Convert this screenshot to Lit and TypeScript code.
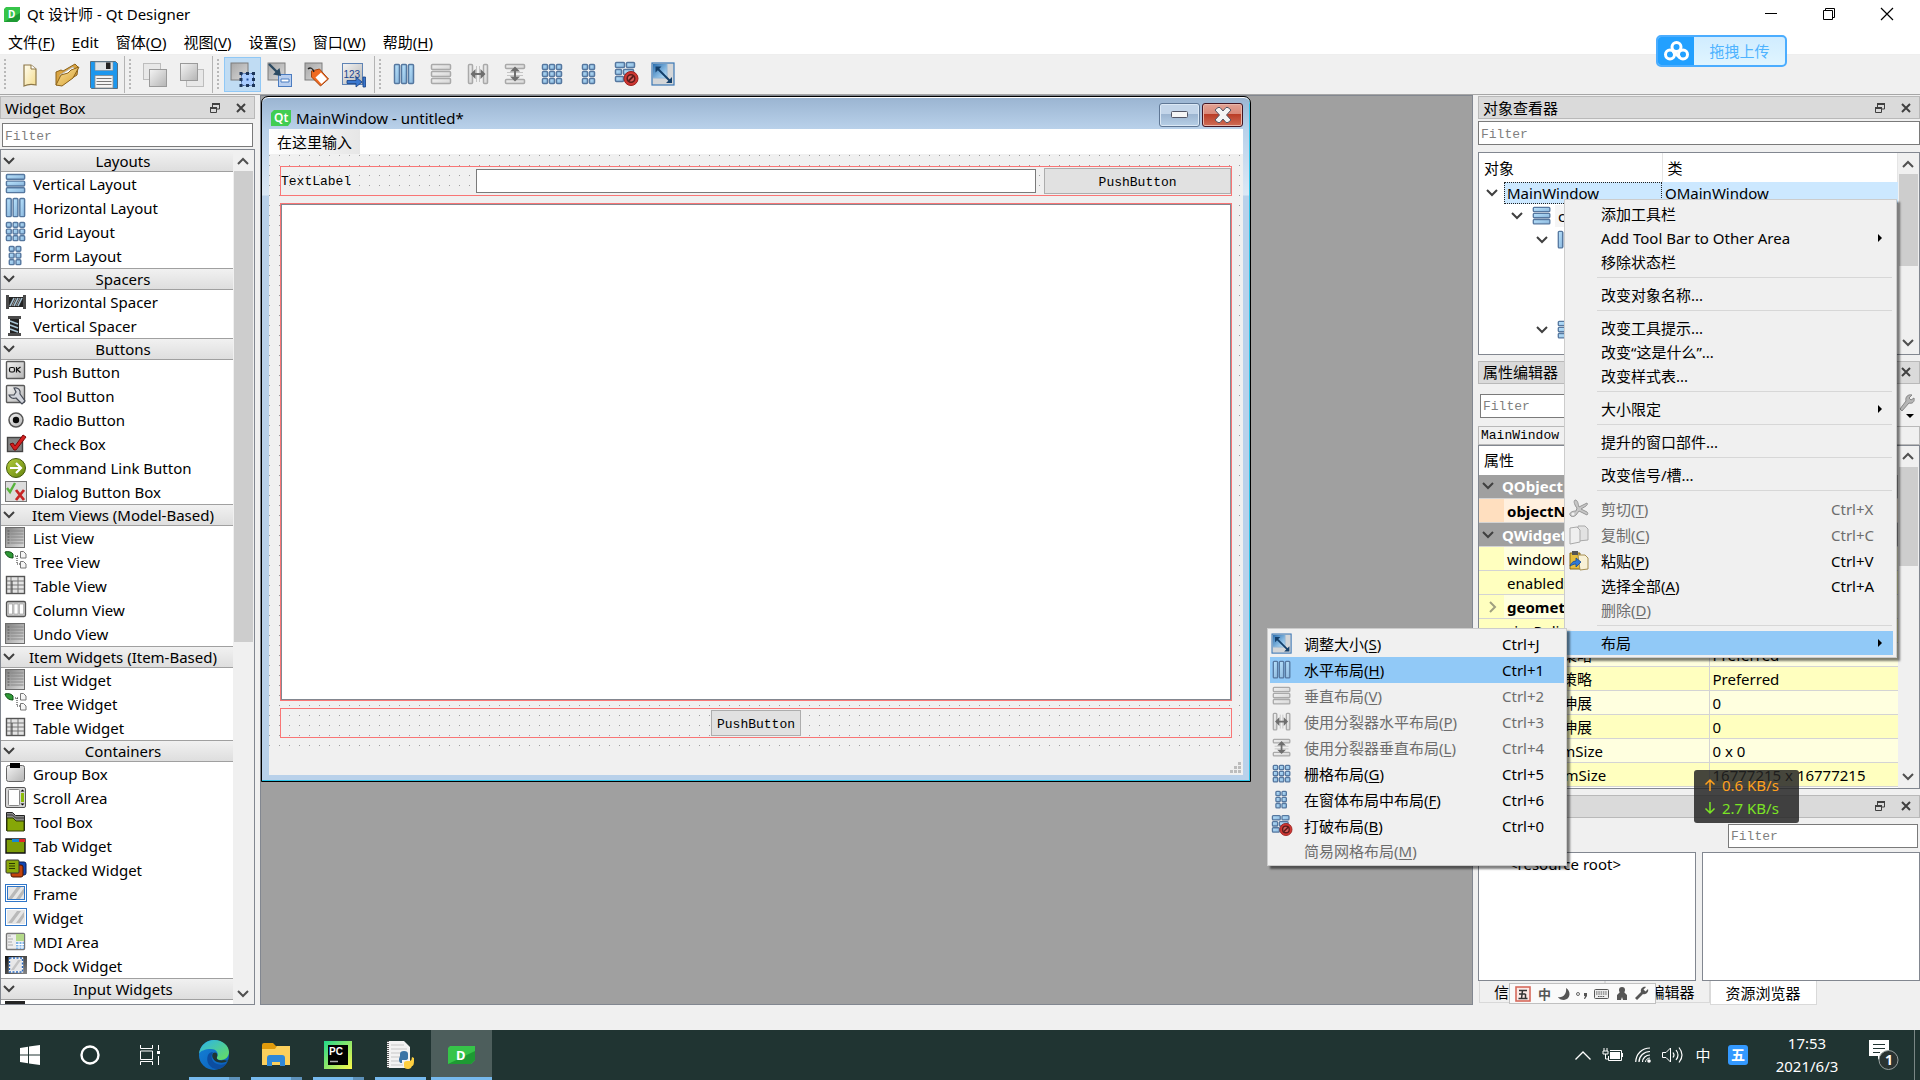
import { LitElement, html, css, svg, nothing, TemplateResult } from "lit";
import { customElement } from "lit/decorators.js";
import { classMap } from "lit/directives/class-map.js";

type Rect = [number, number, number, number];

const LAYOUT_CELLS: Record<string, Rect[]> = {
  h: [[0, 0, 6, 20], [7, 0, 6, 20], [14, 0, 6, 20]],
  v: [[0, 0, 20, 6], [0, 7, 20, 6], [0, 14, 20, 6]],
  grid: [0, 7, 14].flatMap((y) => [0, 7, 14].map((x) => [x, y, 6, 6] as Rect)),
  form: [0, 7, 14].flatMap((y) => [3, 10].map((x) => [x, y, 6, 6] as Rect)),
  splitH: [[0, 0, 5, 20], [15, 0, 5, 20]],
  splitV: [[0, 0, 20, 5], [0, 15, 20, 5]],
};

/** Toolbar and menu glyphs for the layout commands, drawn on a 20 unit grid. */
function layoutIcon(kind: string, gray = false, size = 20): TemplateResult {
  const stroke = gray ? "#a9a9a9" : "#55779f";
  const fill = gray ? "url(#cellGray)" : "url(#cellBlue)";
  const cells = (list: Rect[]) =>
    list.map(
      ([x, y, w, h]) => svg`<rect x=${x + 0.5} y=${y + 0.5} width=${w - 1} height=${h - 1} rx="1" fill=${fill} stroke=${stroke} stroke-width="1.5"/>`
    );
  let body: unknown;
  if (kind === "break") {
    body = svg`${cells([[-1, -2, 10, 6], [10, -2, 9, 6], [-1, 5, 7, 6], [7, 5, 11, 6], [-1, 12, 9, 6]])}
      <circle cx="15" cy="14.500" r="7" fill="#cf3733" stroke="#9a1f1c"/>
      <circle cx="15" cy="14.500" r="3.800" fill="#d9605c" stroke="#5e1d1c" stroke-width="1.6"/>
      <path d="M12.500 17l5-5" stroke="#5e1d1c" stroke-width="1.800"/>`;
  } else if (kind === "adjust") {
    body = svg`<rect x="-1" y="-1" width="22" height="22" fill="#d4d6d8" stroke="#3b77b5" stroke-width="1.2"/>
      <rect x="0" y="0" width="14" height="14" fill="url(#adjustBlue)"/>
      <path d="M0 14h14V0" fill="none" stroke="#8fb4d4"/>
      <path d="M4 4l13 13" stroke="#143f6a" stroke-width="2"/>
      <path d="M2.500 2.500h6l-6 6zM19 19h-6l6-6z" fill="#143f6a"/>`;
  } else if (kind === "splitH") {
    body = svg`${cells(LAYOUT_CELLS.splitH)}<path d="M8.500 2v16M11.500 2v16" stroke="#c4c4c4"/>
      <path d="M2.500 10l5-5v4h5V5l5 5-5 5v-4h-5v4z" fill="#6e6e6e"/>`;
  } else if (kind === "splitV") {
    body = svg`${cells(LAYOUT_CELLS.splitV)}<path d="M2 8.500h16M2 11.500h16" stroke="#c4c4c4"/>
      <path d="M10 2.500l5 5h-4v5h4l-5 5-5-5h4v-5H5z" fill="#6e6e6e"/>`;
  } else {
    body = svg`${cells(LAYOUT_CELLS[kind])}`;
  }
  return html`<svg class="glyph" width=${size} height=${size} viewBox="-1 -1 23 23" aria-hidden="true">${body}</svg>`;
}

const listBody = svg`<rect x="0.500" y="0.500" width="19" height="20" fill="url(#metal)" stroke="#6d6d6d"/>
  <path d="M2.500 4h2M2.500 7h2M2.500 10h2M2.500 13h2M2.500 16h2" stroke="#555"/>
  <path d="M5.500 4h13M5.500 7h13M5.500 10h13M5.500 13h13M5.500 16h13" stroke="#888"/>`;
const treeBody = svg`<path d="M0 1c3-1 7 0 8 2v4c-4 0-7-2-8-6z" fill="#2f9a37" stroke="#14501a"/>
  <path d="M10 5h4M12 5v8h3" stroke="#222" fill="none" stroke-dasharray="1 1"/>
  <path d="M15.500 0.500h3l2.500 2.500v4h-5.500zM15.500 10.500h3l2.500 2.500v4h-5.500z" fill="#f5f5f5" stroke="#777"/>`;
const tableBody = svg`<rect x="1.500" y="1.500" width="18" height="17" fill="#e4e4e4" stroke="#555" stroke-width="1.400"/>
  <path d="M2 6h17M2 10h17M2 14h17M6 2v16M13 2v16" stroke="#777"/><path d="M7 6v12" stroke="#444"/>`;
const widgetStripes = svg`<path d="M3 16L12 4h4L7 16zM11 16l8-11v5l-4 6z" fill="#b9b9b9"/>`;

const WIDGET_ART: Record<string, unknown> = {
  hspacer: svg`<path d="M1 4h3v14H1zM18 4h3v14h-3z" fill="#4a4a4a"/><path d="M4 6h14v10H4z" fill="#222"/>
    <path d="M5 15L9 7M9 15l4-8M13 15l4-8" stroke="#a8c4d4" stroke-width="1.600"/><path d="M7 15l4-8M11 15l4-8" stroke="#fff" stroke-width=".6"/>`,
  vspacer: svg`<path d="M3 1h13v3H3zM3 18h13v3H3z" fill="#4a4a4a"/><path d="M5 4h9v14H5z" fill="#222"/>
    <path d="M5 6l8 3M5 10l8 3M5 14l8 3" stroke="#a8c4d4" stroke-width="1.600"/>`,
  push: svg`<rect x="1.500" y="0.500" width="18" height="17" rx="1" fill="url(#plate)" stroke="#5a5a5a" stroke-width="1.400"/>
    <rect x="4.500" y="6.500" width="5" height="4.500" rx="1.500" fill="none" stroke="#111" stroke-width="1.200"/><path d="M11.500 6v5.500M15.500 6l-3.500 2.500 3.500 3" fill="none" stroke="#111" stroke-width="1.200"/>`,
  tool: svg`<rect x="1.500" y="0.500" width="18" height="17" rx="1" fill="url(#plate)" stroke="#5a5a5a" stroke-width="1.400"/>
    <path d="M9 3c4-1 7 2 6 6l5 7-3 3-6-6c-3 1-6 0-7-3h5l2-3z" fill="#d2d5dc" stroke="#454a55" stroke-width="1.200"/>`,
  radio: svg`<circle cx="11" cy="11" r="7" fill="url(#plate)" stroke="#555" stroke-width="1.500"/><circle cx="11" cy="11" r="3.200" fill="#0a0a0a"/>`,
  check: svg`<rect x="2.500" y="4.500" width="15" height="14" fill="#858585" stroke="#444" stroke-width="1.400"/>
    <path d="M5 11l3-1 2 3 8-11 3 2L11 17H9z" fill="#d41f1f" stroke="#7d0909"/>`,
  command: svg`<circle cx="11" cy="11" r="9.500" fill="url(#olive)" stroke="#42580c"/><path d="M5 11h10M11 6l5 5-5 5" fill="none" stroke="#fff" stroke-width="2.200"/>`,
  dialog: svg`<rect x="0.500" y="0.500" width="21" height="20" fill="#dcdcdc" stroke="#777"/>
    <path d="M2 7l3 4 5-9" fill="none" stroke="#57b33b" stroke-width="2.400"/><path d="M11 9l8 10M19 9l-8 10" stroke="#c72626" stroke-width="2.800"/>`,
  list: listBody,
  tree: treeBody,
  table: tableBody,
  column: svg`<rect x="1.500" y="2.500" width="19" height="15" rx="1.500" fill="#ccc" stroke="#555" stroke-width="1.300"/>
    <path d="M3.500 5h4v10h-4zM9 5h4v10H9zM14.500 5h4v10h-4z" fill="#fff" stroke="#999" stroke-width=".6"/>`,
  group: svg`<rect x="1.500" y="2.500" width="18" height="16" rx="2" fill="url(#plate)" stroke="#666"/><path d="M5 0h10v5H5z" fill="#000"/>`,
  scroll: svg`<rect x="0.500" y="0.500" width="20" height="20" rx="1.500" fill="#d5d5d5" stroke="#555"/><rect x="3.500" y="2.500" width="11" height="16" rx="1" fill="#fff" stroke="#888"/>
    <path d="M16 6h3v9h-3z" fill="#8dbb0a"/><path d="M15.500 4.500l2-2 2 2zM15.500 16.500l2 2 2-2z" fill="#000"/>`,
  toolbox: svg`<path d="M1.500 1.500h6l3 3h9v15h-18z" fill="#8c8c8c" stroke="#222"/><path d="M1.500 4h6l3 3h9" stroke="#333" fill="none"/><path d="M2 7h6l3 3h8v10H2z" fill="#86a708" stroke="#2f3c00"/>`,
  tab: svg`<path d="M1 4h19v14H1z" fill="#7d9d08" stroke="#111" stroke-width="1.400"/><path d="M7 4h7v3H7z" fill="#1489d4"/><path d="M14 4h6v3h-6z" fill="#e02626"/>`,
  stacked: svg`<rect x="10" y="3" width="11" height="13" rx="2" fill="#1246b4" stroke="#0a1f55"/><rect x="6" y="6" width="12" height="12" rx="2" fill="#c2430c" stroke="#4a1500"/>
    <rect x="1" y="1" width="13" height="13" rx="1" fill="#8aa80c" stroke="#333"/><path d="M4 4.500h6M4 7h6M4 9.500h6" stroke="#2c3a00"/>`,
  frame: svg`<rect x="0.500" y="1.500" width="21" height="17" fill="#fff" stroke="#3076c8"/><rect x="2.500" y="3.500" width="17" height="13" fill="#e6e6e6" stroke="#3076c8"/>${widgetStripes}`,
  widget: svg`<rect x="0.500" y="1.500" width="21" height="17" fill="#fff" stroke="#3076c8"/><rect x="2" y="3" width="18" height="14" fill="#e6e6e6"/>${widgetStripes}`,
  mdi: svg`<rect x="1.500" y="2.500" width="18" height="16" rx="1" fill="#ededed" stroke="#777" stroke-width="1.400"/><path d="M11 3h8v7h-8z" fill="#b4d989"/><path d="M11 11h8v7h-8z" fill="#7db1e4"/>
    <path d="M11 13.500h8M11 16h8M14 11v7M17 11v7" stroke="#fff"/><path d="M3 5h3M3 8h5M3 11h4M3 14h5" stroke="#aaa"/>`,
  dock: svg`<rect x="0" y="1" width="22" height="18" fill="url(#dockDark)"/><rect x="4.500" y="3" width="13" height="14" fill="#e8e8e8" stroke="#fff" stroke-width="1.400"/><rect x="4.500" y="3" width="13" height="14" fill="none" stroke="#2b6ac0" stroke-width="1.400" stroke-dasharray="2 1.500"/>
    <path d="M6 15l7-10h3L9 15z" fill="#c5c5c5"/>`,
  combo: svg`<rect x="0" y="0" width="20" height="16" fill="#242424"/>`,
};

function widgetIcon(name: string): TemplateResult {
  if (name in LAYOUT_CELLS) return layoutIcon(name, false, 22);
  return html`<svg class="glyph" width="22" height="22" viewBox="0 0 22 22" aria-hidden="true">${WIDGET_ART[name]}</svg>`;
}

const CATEGORIES: { name: string; items: [string, string][] }[] = [
  { name: "Layouts", items: [["v", "Vertical Layout"], ["h", "Horizontal Layout"], ["grid", "Grid Layout"], ["form", "Form Layout"]] },
  { name: "Spacers", items: [["hspacer", "Horizontal Spacer"], ["vspacer", "Vertical Spacer"]] },
  {
    name: "Buttons",
    items: [["push", "Push Button"], ["tool", "Tool Button"], ["radio", "Radio Button"], ["check", "Check Box"], ["command", "Command Link Button"], ["dialog", "Dialog Button Box"]],
  },
  { name: "Item Views (Model-Based)", items: [["list", "List View"], ["tree", "Tree View"], ["table", "Table View"], ["column", "Column View"], ["list", "Undo View"]] },
  { name: "Item Widgets (Item-Based)", items: [["list", "List Widget"], ["tree", "Tree Widget"], ["table", "Table Widget"]] },
  {
    name: "Containers",
    items: [["group", "Group Box"], ["scroll", "Scroll Area"], ["toolbox", "Tool Box"], ["tab", "Tab Widget"], ["stacked", "Stacked Widget"], ["frame", "Frame"], ["widget", "Widget"], ["mdi", "MDI Area"], ["dock", "Dock Widget"]],
  },
  { name: "Input Widgets", items: [["combo", ""]] },
];

const sheet = svg`<rect x="0" y="0" width="17" height="17" fill="url(#plateDark)" stroke="#7d7d7d"/>`;
const TOOL_ART: Record<string, unknown> = {
  new: svg`<path d="M6 2h7l5 4v16c-4-1-8-1-12 1z" fill="url(#paper)" stroke="#8d7747" stroke-width="1.200"/><path d="M13 2v4h5" fill="#fff" stroke="#8d7747"/>`,
  open: svg`<path d="M1 22V9l5-2 2 1 12-7 3 3-1 8-14 9z" fill="#d9a441" stroke="#8c631b"/><path d="M5 12L18 4l2 2-1 6-13 7z" fill="#fff" stroke="#bbb"/>
    <path d="M1 22l5-10 7-2 3-3 8-3-6 11-11 8z" fill="url(#folder)" stroke="#8c631b"/>`,
  save: svg`<path d="M-1.500-1.500h25l2 2v25h-26l-1-1z" fill="#1c97ee" stroke="#4d5a66" stroke-width=".8"/><path d="M3-1h18v8.500H3z" fill="#dfe3e6" stroke="#7b8a96" stroke-width=".6"/><path d="M14-.5h4.500v6.500H14z" fill="#222"/>
    <path d="M3 12.500h18V25H3z" fill="#f4f4f4" stroke="#888" stroke-width=".8"/><path d="M4.500 15.500h15M4.500 18.500h15M4.500 21.500h15" stroke="#777"/>`,
  toBack: svg`<rect x="0.500" y="0.500" width="17" height="16" fill="#e8e8e8" stroke="#bdbdbd"/><rect x="6.500" y="6.500" width="17" height="17" fill="url(#plate)" stroke="#9a9a9a"/>`,
  toFront: svg`<rect x="6.500" y="6.500" width="17" height="17" fill="#e8e8e8" stroke="#bdbdbd"/><rect x="0.500" y="0.500" width="17" height="17" fill="url(#plate)" stroke="#9a9a9a"/>`,
  widgets: svg`${sheet}<rect x="10.500" y="10.500" width="12" height="12" fill="#a9ccff" stroke="#3c5c98" stroke-dasharray="2 1"/>
    <path d="M8.500 9h3v3h-3zM15 9h3v3h-3zM21 9h3v3h-3zM8.500 15h3v3h-3zM21 15h3v3h-3zM8.500 21h3v3h-3zM15 21h3v3h-3zM21 21h3v3h-3z" fill="#1d3558"/><path d="M15.500 15.500h2v2h-2z" fill="#24509c"/>`,
  signals: svg`${sheet}<rect x="10.500" y="11.500" width="13" height="12" fill="#b9cff0" stroke="#4b7cc0"/><path d="M13 16h8v3h-8z" fill="#fff" stroke="#4b7cc0"/>
    <path d="M1 1l9 9" stroke="#2c4a62" stroke-width="2.400"/><path d="M13 13l-8-1.500L11.500 5z" fill="#2c4a62"/>`,
  buddies: svg`${sheet}<path d="M6.500 8l8-2 9 10-8 7-9-9z" fill="#ef6a22" stroke="#a24410"/><path d="M10.500 14.500l5.500-5 6 6.500-5.500 5z" fill="#fff"/><path d="M3 6c2-2 5-1 6 3" fill="none" stroke="#222" stroke-width="1.300"/>`,
  tabs: svg`<rect x="0.500" y="0.500" width="20" height="21" fill="url(#plate)" stroke="#5f83b4"/><path d="M5 17.500h9V14l6 5-6 5v-3.500H5zM21 14h2.500v10H21z" fill="#3a78d0" stroke="#173f82" stroke-width=".8"/>
    <text x="1.500" y="14.500" font-family="Liberation Sans, sans-serif" font-size="10" fill="#1c4590">123</text>`,
};

function toolIcon(name: string): TemplateResult {
  return html`<svg class="glyph" width="24" height="24" viewBox="0 0 24 24" aria-hidden="true">${TOOL_ART[name]}</svg>`;
}

const MENU_BAR = ["文件(&F)", "&Edit", "窗体(&O)", "视图(&V)", "设置(&S)", "窗口(&W)", "帮助(&H)"];

/** Renders a caption whose access key is marked with an ampersand. */
function caption(text: string): unknown {
  const at = text.indexOf("&");
  if (at < 0) return text;
  return html`${text.slice(0, at)}<u>${text[at + 1]}</u>${text.slice(at + 2)}`;
}

interface MenuEntry {
  text: string;
  key?: string;
  icon?: TemplateResult;
  off?: boolean;
  sub?: boolean;
  active?: boolean;
  tall?: boolean;
}

const cutIcon = html`<svg class="glyph" width="20" height="20" viewBox="0 0 20 20" aria-hidden="true"><path d="M6 1c3 0 3 4 4 7l8-4c1 1 0 2-1 3l-5 3 6 3c1 1 1 2 0 3l-8-4-3 4c-2 2-5 2-6 0s2-4 6-4l1-3C6 7 4 2 6 1z" fill="#c6c6c6" stroke="#969696"/><circle cx="4" cy="15" r="1.500" fill="#f0f0f0"/></svg>`;
const copyIcon = html`<svg class="glyph" width="20" height="20" viewBox="0 0 20 20" aria-hidden="true"><path d="M9 1h7l3 3v11l-10 1z" fill="#e2e2e2" stroke="#a9a9a9"/><path d="M1 3l7-1 3 3v12l-10 2z" fill="#efefef" stroke="#a9a9a9"/></svg>`;
const pasteIcon = html`<svg class="glyph" width="20" height="20" viewBox="0 0 20 20" aria-hidden="true"><path d="M1 2h10v16H1z" fill="#e5bd3e" stroke="#8a6a14"/><path d="M3 0h6v4H3z" fill="#555"/><path d="M9 4h7l3 3v11l-8 1z" fill="#f8f1d6" stroke="#a58e52"/><path d="M1 15c1-3 3-5 6-5V7l5 4-5 5v-3c-2 0-4 1-6 2z" fill="#2f79d6" stroke="#184a90" stroke-width=".8"/></svg>`;

const CONTEXT_MENU: (MenuEntry | null)[] = [
  { text: "添加工具栏" },
  { text: "Add Tool Bar to Other Area", sub: true },
  { text: "移除状态栏" },
  null,
  { text: "改变对象名称..." },
  null,
  { text: "改变工具提示..." },
  { text: "改变“这是什么”..." },
  { text: "改变样式表..." },
  null,
  { text: "大小限定", sub: true },
  null,
  { text: "提升的窗口部件..." },
  null,
  { text: "改变信号/槽..." },
  null,
  { text: "剪切(&T)", key: "Ctrl+X", icon: cutIcon, off: true, tall: true },
  { text: "复制(&C)", key: "Ctrl+C", icon: copyIcon, off: true, tall: true },
  { text: "粘贴(&P)", key: "Ctrl+V", icon: pasteIcon, tall: true },
  { text: "选择全部(&A)", key: "Ctrl+A" },
  { text: "删除(&D)", off: true },
  null,
  { text: "布局", sub: true, active: true },
];

const LAYOUT_MENU: MenuEntry[] = [
  { text: "调整大小(&S)", key: "Ctrl+J", icon: layoutIcon("adjust"), tall: true },
  { text: "水平布局(&H)", key: "Ctrl+1", icon: layoutIcon("h"), active: true, tall: true },
  { text: "垂直布局(&V)", key: "Ctrl+2", icon: layoutIcon("v", true), off: true, tall: true },
  { text: "使用分裂器水平布局(&P)", key: "Ctrl+3", icon: layoutIcon("splitH", true), off: true, tall: true },
  { text: "使用分裂器垂直布局(&L)", key: "Ctrl+4", icon: layoutIcon("splitV", true), off: true, tall: true },
  { text: "栅格布局(&G)", key: "Ctrl+5", icon: layoutIcon("grid"), tall: true },
  { text: "在窗体布局中布局(&F)", key: "Ctrl+6", icon: layoutIcon("form"), tall: true },
  { text: "打破布局(&B)", key: "Ctrl+0", icon: layoutIcon("break"), tall: true },
  { text: "简易网格布局(&M)", off: true },
];

interface PropertyRow {
  name: string;
  value?: string;
  kind?: "group" | "orange";
  bold?: boolean;
  deep?: boolean;
  expandable?: boolean;
}

const PROPERTIES: PropertyRow[] = [
  { name: "QObject", kind: "group" },
  { name: "objectName", kind: "orange", bold: true },
  { name: "QWidget", kind: "group" },
  { name: "windowModality" },
  { name: "enabled" },
  { name: "geometry", bold: true, expandable: true },
  { name: "sizePolicy" },
  { name: "水平策略", value: "Preferred", deep: true },
  { name: "垂直策略", value: "Preferred", deep: true },
  { name: "水平伸展", value: "0", deep: true },
  { name: "垂直伸展", value: "0", deep: true },
  { name: "minimumSize", value: "0 x 0" },
  { name: "maximumSize", value: "16777215 x 16777215" },
];

const OBJECTS: { name: string; cls: string; level: number; icon?: string; open?: boolean; selected?: boolean; hover?: boolean }[] = [
  { name: "MainWindow", cls: "QMainWindow", level: 0, open: true, selected: true },
  { name: "centralwidget", cls: "", level: 1, icon: "v", open: true, hover: true },
  { name: "", cls: "", level: 2, icon: "h", open: true },
  { name: "", cls: "", level: 3 },
  { name: "", cls: "", level: 3 },
  { name: "", cls: "", level: 3 },
  { name: "", cls: "", level: 2, icon: "v", open: true },
];

const chevron = (dir: "down" | "up" | "right", color = "#404040") => {
  const d = dir === "down" ? "M1 3l5 5 5-5" : dir === "up" ? "M1 9l5-5 5 5" : "M4 1l5 5-5 5";
  return html`<svg class="glyph" width="12" height="12" viewBox="0 0 12 12" aria-hidden="true"><path d=${d} fill="none" stroke=${color} stroke-width="2"/></svg>`;
};

const scrollbar = (percent: number) => html`
  <div class="scrollbar">
    <button class="scroll-arrow" aria-label="Scroll up">${chevron("up", "#505050")}</button>
    <div class="scroll-track"><div class="scroll-thumb" style="height:${percent}%"></div></div>
    <button class="scroll-arrow" aria-label="Scroll down">${chevron("down", "#505050")}</button>
  </div>
`;

const dockTitle = (text: string) => html`
  <header class="dock-title">
    <span class="dock-name">${text}</span>
    <button class="dock-button" aria-label="Float">
      <svg class="glyph" width="12" height="12" viewBox="0 0 12 12" aria-hidden="true"><path d="M3.500 5V1.500h7V7H8" fill="none" stroke="#404040"/><path d="M3 1h8v2H3zM1 5h7v2H1z" fill="#404040"/><path d="M1.500 5.500h6v5h-6z" fill="none" stroke="#404040"/></svg>
    </button>
    <button class="dock-button" aria-label="Close">
      <svg class="glyph" width="12" height="12" viewBox="0 0 12 12" aria-hidden="true"><path d="M2 2l8 8M10 2l-8 8" stroke="#404040" stroke-width="2"/></svg>
    </button>
  </header>
`;

const TASKS: { name: string; art: unknown; stacked?: boolean; active?: boolean }[] = [
  {
    name: "Edge",
    stacked: true,
    art: svg`<circle cx="15" cy="15" r="15" fill="url(#edgeBlue)"/><path d="M0 14C1 5 8 0 15 0c9 0 15 6 15 12 0 5-4 8-8 8-3 0-5-1-4-3 2-3 0-8-6-8C6 9 1 11 0 14z" fill="url(#edgeGreen)"/>
      <path d="M9 15c-3 8 3 15 11 14 3-1 6-3 8-6-5 3-13 2-15-4-1-3 0-5 1-7-2 0-4 1-5 3z" fill="#0c4da0"/><path d="M14 13c-2 3 0 7 4 9 4 1 8 1 10-1 1-1 3 0 1 3v-3l-4-1c-4 1-8 0-7-3 1-2 0-6-4-4z" fill="#203432"/>`,
  },
  {
    name: "Explorer",
    stacked: true,
    art: svg`<path d="M1 5q0-2 2-2h9l3 3h12q2 0 2 2v17H1z" fill="#e09a0b"/><path d="M1 9h13l2-3h13v19H1z" fill="#fcd05c"/><path d="M6 26V18q0-3 3-3h12q3 0 3 3v8h-5v-4h-8v4z" fill="#2f88d8"/>`,
  },
  {
    name: "PyCharm",
    stacked: true,
    art: svg`<rect x="1" y="1" width="28" height="28" fill="url(#charm)"/><rect x="5" y="5" width="20" height="20" fill="#000"/>
      <text x="6" y="15" font-family="Liberation Sans, sans-serif" font-size="10" font-weight="bold" fill="#fff">PC</text><path d="M7 21.500h8" stroke="#aaa" stroke-width="1.500"/>`,
  },
  {
    name: "Python",
    art: svg`<path d="M2 1h17l6 6v21H2z" fill="#f2f2f2"/><path d="M3 1v27" stroke="#555" stroke-width="2" stroke-dasharray="1 1"/><path d="M6 5h13M6 9h16M6 13h13M6 17h9M6 21h9M6 25h12" stroke="#c6c6c6"/>
      <path d="M15 16v-2q0-3 4-3t4 3v4q0 2-3 2h-3v3h-1q-2 0-2-4z" fill="#3a73a5"/><path d="M29 18v3q0 5-2 5-1 3-4 3-4 0-4-3v-3q0-2 3-2h3q2-1 2-4z" fill="#ffd040"/>`,
  },
  {
    name: "Designer",
    active: true,
    art: svg`<path d="M4 6h25v14l-4 4H2V8z" fill="#36c449"/><path d="M2 24l27-13v9l-4 4z" fill="#1e9a33"/>
      <text x="10" y="20" font-family="Noto Sans, sans-serif" font-size="13" font-weight="bold" fill="#fff">D</text>`,
  },
];

@customElement("app-root")
export class AppRoot extends LitElement {
  static styles = css`
    :host {
      display: flex;
      flex-direction: column;
      position: relative;
      height: 100vh;
      overflow: hidden;
      background: #f0f0f0;
      color: #000;
      font: 15px/20px "Noto Sans", "Noto Sans CJK SC", sans-serif;
    }
    * { box-sizing: border-box; }
    button, input { font: inherit; color: inherit; margin: 0; }
    button { border: 0; padding: 0; background: none; }
    .glyph { display: block; flex: none; overflow: visible; }
    .defs { position: absolute; }
    u { text-underline-offset: 2px; text-decoration-thickness: 1px; }

    .title-bar { display: flex; align-items: center; height: 30px; padding: 0 4px 2px; background: #fff; }
    .title-text { flex: 1; margin: 0 0 0 7px; font-size: 15px; font-weight: 400; }
    .caption-button { display: grid; place-items: center; width: 58px; height: 28px; }
    .menu-bar { display: flex; gap: 17px; height: 25px; padding-left: 8px; background: #fff; border-bottom: 1px solid #eee; }
    .menu-button { line-height: 24px; white-space: nowrap; }

    .toolbar { display: flex; height: 40px; padding: 1px 0; border-bottom: 1px solid #a6a6a6; }
    .tool-group { display: flex; align-items: center; padding-right: 2px; border-right: 1px solid #b4b4b4; }
    .tool-group:last-child { border: 0; }
    .grip { width: 11px; height: 32px; background: linear-gradient(#b8b8b8, #b8b8b8) 4px 0 / 2px 100% no-repeat; -webkit-mask: repeating-linear-gradient(#000 0 2px, transparent 2px 4px); mask: repeating-linear-gradient(#000 0 2px, transparent 2px 4px); }
    .tool-button { display: grid; place-items: center; width: 37px; height: 35px; }
    .tool-button.on { background: #c0dcf3; border: 1px solid #90c8f6; }

    .main { flex: 1; min-height: 0; display: grid; grid-template-columns: 255px minmax(0, 1fr) 442px; gap: 5px; }
    .dock { display: flex; flex-direction: column; min-height: 0; min-width: 0; padding-top: 1px; }
    .dock-title { display: flex; align-items: center; flex: none; height: 23px; padding-left: 4px; background: #dadada; border: 1px solid #b9b9b9; }
    .dock-name { flex: 1; white-space: nowrap; }
    .dock-button { display: grid; place-items: center; width: 26px; height: 21px; }
    .field { display: block; width: 100%; height: 24px; padding: 2px 2px 0; background: #fff; border: 1px solid #7a7a7a; border-radius: 0; font: 13px/20px "Liberation Mono", monospace; outline: 0; }
    .field::placeholder { color: #7f7f7f; opacity: 1; }
    .panel { display: flex; flex: 1; min-height: 0; background: #fff; border: 1px solid #828790; overflow: hidden; }

    .widget-filter { padding: 4px 2px 2px; }
    .widget-list { flex: 1; min-width: 0; overflow: hidden; }
    .category { display: flex; align-items: center; width: 100%; height: 22px; padding: 0 2px; background: linear-gradient(#f1f1f1, #dedede); border-top: 1px solid #a0a0a0; border-bottom: 1px solid #a0a0a0; }
    .category:first-child { border-top-color: #f1f1f1; }
    .category-name { flex: 1; text-align: center; white-space: nowrap; }
    .items { list-style: none; margin: 0; padding: 0; }
    .item { display: flex; align-items: center; gap: 6px; height: 24px; padding-left: 4px; white-space: nowrap; }

    .scrollbar { flex: none; display: flex; flex-direction: column; width: 21px; padding-left: 1px; background: #f0f0f0; }
    .scroll-arrow { display: grid; place-items: center; height: 21px; width: 18px; }
    .scroll-track { flex: 1; min-height: 0; }
    .scroll-thumb { width: 19px; background: #cdcdcd; }

    .workspace { position: relative; min-width: 0; background: #a0a0a0; border: 1px solid #828790; overflow: hidden; }
    .mdi { position: absolute; left: 0; top: 0; width: 990px; height: 686px; display: flex; flex-direction: column; padding: 0 7px 6px; border: 1px solid #000; border-radius: 7px 7px 0 0; background: linear-gradient(#9ab4d1 0, #b9d1ea 32px, #dbe8f5 98px, #b9d1ea 99px); box-shadow: inset 0 1px #fff, inset -1px -1px #2fc4e8; }
    .mdi-title { display: flex; align-items: center; height: 32px; flex: none; padding-left: 2px; }
    .mdi-name { flex: 1; padding: 10px 0 0 5px; white-space: pre; }
    .mdi-logo { padding-top: 9px; }
    .mdi-button { display: grid; place-items: center; width: 41px; height: 24px; margin: 3px 0 0 2px; border: 1px solid #5f7795; border-radius: 3px; background: linear-gradient(#c3d5e9 0 45%, #9bb4d0 45%, #b7cfe6); box-shadow: inset 0 0 0 1px #dbe8f5; }
    .mdi-button.close { background: linear-gradient(#e2a294 0, #d98878 45%, #b93b25 45%, #cf6d56); border-color: #431422; box-shadow: inset 0 0 0 1px #e9b6a9; }
    .mdi-menu { flex: none; height: 25px; background: #fff; }
    .type-here { height: 25px; width: 91px; padding: 0 0 0 8px; text-align: left; background: linear-gradient(90deg, #fff, #e6e6e6); white-space: nowrap; }
    .canvas { flex: 1; min-height: 0; display: flex; flex-direction: column; gap: 7px; padding: 12px 11px 13px; background: conic-gradient(from 270deg at 1px 1px, #9c9c9c 90deg, transparent 0) 0 1px / 10px 10px #f0f0f0; }
    .form-row { display: grid; grid-template-columns: 1fr 3fr 1fr; align-items: center; gap: 8px; flex: none; height: 30px; border: 1px solid #f97575; }
    .form-row.last { display: flex; justify-content: center; }
    .mono { font: 13px/24px "Liberation Mono", monospace; padding-top: 2px; }
    .push { height: 26px; padding: 2px 5px 0; background: #e1e1e1; border: 1px solid #adadad; }
    .text-frame { flex: 1; min-height: 0; display: flex; border: 1px solid #f97575; }
    .text-edit { display: block; flex: 1; min-width: 0; margin: 0; border: 1px solid #828790; outline: 0; border-radius: 0; resize: none; background: #fff; }
    .mdi-status { display: flex; justify-content: flex-end; align-items: flex-end; flex: none; height: 24px; padding: 2px; background: #f0f0f0; }

    table { border-collapse: collapse; table-layout: fixed; width: 100%; }
    th, td { padding: 0; font-weight: 400; text-align: left; white-space: nowrap; overflow: hidden; }
    .tree-area { flex: 1; min-width: 0; overflow: hidden; background: #fff; }
    .tree-head th { height: 29px; padding-left: 5px; border-right: 1px solid #e5e5e5; }
    .tree-cell { display: flex; align-items: center; }
    .tree-cell > .glyph { margin: 0 3px; }
    .col-object { width: 183px; }
    .object-row { height: 22px; }
    .object-row.with-icon { height: 24px; }
    .object-row.selected .object-class, .object-row.selected .object-name { background: #cce8ff; }
    .object-row.selected .object-name { outline: 1px dotted #222; outline-offset: -1px; }
    .object-row.hover .object-name { background: #f5f5f5; }
    .object-name { flex: 1; height: 22px; line-height: 22px; padding-left: 3px; overflow: hidden; }
    .object-class { padding-left: 3px; }
    .twist { flex: none; width: 25px; display: grid; place-items: center; }
    .pad { flex: none; }
    .inspector-filter { padding: 2px 0 7px; }
    .inspector-tree { flex: 202 1 0; }

    .property-title { margin-top: 6px; }
    .property-tools { display: flex; align-items: center; gap: 8px; height: 42px; padding: 2px 2px 0 2px; }
    .property-tools .field { flex: 1; }
    .object-label { height: 19px; padding-left: 2px; border: 1px solid #b9b9b9; font: 13px/18px "Liberation Mono", monospace; }
    .property-tree { flex: 345 1 0; }
    .col-property { width: 230px; }
    .prop-row td { height: 24px; line-height: 20px; background: #ffffbf; border-bottom: 1px solid #d4d4d4; }
    .prop-row:nth-child(even) td { background: #ffffdf; }
    .prop-row td:first-child { border-right: 1px solid #d4d4d4; }
    .prop-row .twist { align-self: stretch; height: 23px; background: #ffffbf; }
    .prop-row.group td { background: #a0a0a0; color: #fff; font-weight: 700; border-right: 0; }
    .prop-row.group .twist { background: none; width: 18px; }
    .prop-row.group .prop-name { padding-left: 5px; }
    .prop-row.orange td { background: #fff0df; }
    .prop-row.orange .twist { background: #ffdfbf; }
    .prop-name { padding-left: 3px; }
    .prop-name.deep { padding-left: 28px; }
    .bold { font-weight: 700; }
    .prop-value { padding-left: 3px; }

    .resource-title { margin-top: 6px; }
    .resource-filter { width: 190px; align-self: flex-end; margin: 6px 2px 4px 0; }
    .resource-panes { flex: 130 1 0; min-height: 0; display: grid; grid-template-columns: 1fr 1fr; gap: 6px; }
    .resource-root { padding: 1px 0 0 30px; }
    .tabs { display: flex; height: 24px; padding-left: 1px; }
    .tab { height: 22px; padding: 0 14px; line-height: 20px; border: 1px solid #d9d9d9; border-top: 0; white-space: nowrap; }
    .tab.on { height: 24px; padding: 0 15px; background: #fff; }
    .status-line { flex: none; height: 25px; }

    .popup { position: absolute; display: flex; flex-direction: column; padding: 2px; background: #f0f0f0; border: 1px solid #ccc; box-shadow: 3px 3px 2px rgba(0, 0, 0, 0.5); }
    .context { top: 199px; right: 23px; width: 333px; padding-right: 3px; }
    .layouts { top: 628px; right: 353px; width: 300px; }
    .entry { display: flex; align-items: center; flex: none; height: 24px; padding-right: 10px; text-align: left; white-space: nowrap; }
    .entry.tall { height: 26px; }
    .entry.active { background: #91c9f7; }
    .entry:disabled { color: #6d6d6d; }
    .entry-icon { width: 34px; padding-left: 2px; }
    .entry-text { flex: 1; }
    .entry-key { width: 52px; }
    .rule { flex: none; height: 1px; margin: 3px 1px 5px 30px; border: 0; background: #d7d7d7; }

    .upload { position: absolute; top: 35px; right: 133px; width: 131px; height: 32px; display: flex; align-items: stretch; border: 2px solid #4badff; border-radius: 5px; background: linear-gradient(#d0ecff, #e0f5ff); color: #4eb3ff; overflow: hidden; }
    .upload-logo { display: grid; place-items: center; width: 36px; background: #22a0ff; }
    .upload-text { flex: 1; text-align: center; line-height: 28px; }
    .speed { position: absolute; top: 770px; right: 121px; width: 105px; height: 53px; padding: 3px 0 0 10px; border-radius: 3px; background: rgba(35, 35, 35, 0.84); }
    .speed-line { display: flex; align-items: center; gap: 6px; height: 23px; }
    .up { color: #ffa01c; }
    .down { color: #7be524; }
    .ime { position: absolute; top: 983px; right: 264px; height: 21px; width: 147px; display: flex; align-items: center; justify-content: space-around; background: #fafafa; border: 1px solid #c0c0c0; color: #555; padding: 0 4px 0 2px; }
    .ime-mode { font-size: 13px; line-height: 18px; font-weight: 700; }

    .taskbar { flex: none; display: flex; align-items: stretch; height: 50px; background: #203432; color: #fff; }
    .task { display: grid; place-items: center; width: 60px; }
    .launches { display: flex; padding-left: 3px; }
    .launch { display: flex; flex-direction: column; justify-content: flex-end; align-items: center; width: 62px; padding: 0 5px 0 6px; }
    .launch .glyph { margin: 0 1px 7px 0; }
    .launch.active { width: 61px; padding: 0; background: #4d5e5c; }
    .bar { display: flex; width: 100%; height: 3px; background: #76b9ed; }
    .bar.stacked::after { content: ""; margin-left: auto; width: 11px; background: #5d91b9; }
    .tray { display: flex; align-items: center; margin-left: auto; }
    .tray-item { display: grid; place-items: center; width: 30px; height: 40px; }
    .tray-badge { display: grid; place-items: center; width: 20px; height: 20px; margin: 0 0 0 10px; border-radius: 3px; background: #3399ff; font-size: 14px; font-weight: 700; line-height: 18px; }
    .clock { width: 118px; text-align: center; line-height: 23px; }
    .notice { width: 48px; display: grid; place-items: center; padding-right: 12px; }
    .show-desktop { width: 6px; align-self: stretch; border-left: 1px solid #7a8685; }
  `;

  private renderDefs() {
    const gradient = (id: string, a: string, b: string) =>
      svg`<linearGradient id=${id} x1="0" y1="0" x2="1" y2="1"><stop offset="0" stop-color=${a}/><stop offset="1" stop-color=${b}/></linearGradient>`;
    return html`<svg class="defs" width="0" height="0" aria-hidden="true"><defs>
      ${gradient("cellBlue", "#bde6ff", "#86b3da")}${gradient("cellGray", "#f2f2f2", "#d5d5d5")}${gradient("adjustBlue", "#2a6fb0", "#bfe6ff")}
      ${gradient("metal", "#7e7e7e", "#dedede")}${gradient("plate", "#f4f4f4", "#b4b4b4")}${gradient("plateDark", "#a8a8a8", "#d8d8d8")}${gradient("olive", "#b5cf3c", "#64830c")}
      ${gradient("dockDark", "#111", "#888")}${gradient("paper", "#fffdf0", "#f4dc8e")}${gradient("folder", "#fbe29a", "#d69f31")}
      ${gradient("edgeBlue", "#1583d8", "#0a5cb8")}${gradient("edgeGreen", "#2ab2ee", "#69e05a")}${gradient("charm", "#21d789", "#fcf84a")}
    </defs></svg>`;
  }

  private renderTitle() {
    return html`
      <header class="title-bar">
        <svg class="glyph" width="16" height="15" viewBox="0 0 16 15" aria-hidden="true"><path d="M2 0h14v12l-3 3H0V2z" fill="#36c449"/><path d="M0 15l16-9v6l-3 3z" fill="#1e9a33"/><text x="4" y="11" font-family="Noto Sans, sans-serif" font-size="10" font-weight="bold" fill="#fff">D</text></svg>
        <h1 class="title-text">Qt 设计师 - Qt Designer</h1>
        <button class="caption-button" aria-label="Minimize"><svg class="glyph" width="12" height="12" viewBox="0 0 12 12"><path d="M0 5.500h12" stroke="#000"/></svg></button>
        <button class="caption-button" aria-label="Restore"><svg class="glyph" width="12" height="12" viewBox="0 0 12 12"><path d="M.5 2.500h9v9h-9zM2.500 2.500v-2h9v9h-2" fill="none" stroke="#000"/></svg></button>
        <button class="caption-button" aria-label="Close"><svg class="glyph" width="12" height="12" viewBox="0 0 12 12"><path d="M0 0l12 12M12 0L0 12" stroke="#000" stroke-width="1.200"/></svg></button>
      </header>
      <nav class="menu-bar">${MENU_BAR.map((m) => html`<button class="menu-button">${caption(m)}</button>`)}</nav>
    `;
  }

  private renderToolbar() {
    const groups: [string, TemplateResult, boolean?][][] = [
      [["New", toolIcon("new")], ["Open", toolIcon("open")], ["Save", toolIcon("save")]],
      [["Send to back", toolIcon("toBack")], ["Bring to front", toolIcon("toFront")]],
      [["Edit widgets", toolIcon("widgets"), true], ["Edit signals", toolIcon("signals")], ["Edit buddies", toolIcon("buddies")], ["Edit tab order", toolIcon("tabs")]],
      [
        ["Lay out horizontally", layoutIcon("h", false, 23)],
        ["Lay out vertically", layoutIcon("v", true, 23)],
        ["Horizontal splitter", layoutIcon("splitH", true, 23)],
        ["Vertical splitter", layoutIcon("splitV", true, 23)],
        ["Grid", layoutIcon("grid", false, 23)],
        ["Form", layoutIcon("form", false, 23)],
        ["Break layout", layoutIcon("break", false, 23)],
        ["Adjust size", layoutIcon("adjust", false, 23)],
      ],
    ];
    return html`<div class="toolbar">
      ${groups.map(
        (g) => html`<div class="tool-group"><span class="grip"></span>
          ${g.map(([label, icon, on]) => html`<button class=${classMap({ "tool-button": true, on: !!on })} aria-label=${label}>${icon}</button>`)}
        </div>`
      )}
    </div>`;
  }

  private renderWidgetBox() {
    return html`<aside class="dock">
      ${dockTitle("Widget Box")}
      <div class="widget-filter"><input class="field" placeholder="Filter" aria-label="Filter widgets" /></div>
      <div class="panel">
        <div class="widget-list">
          ${CATEGORIES.map(
            (c) => html`<button class="category">${chevron("down")}<span class="category-name">${c.name}</span></button>
              <ul class="items">${c.items.map(([icon, text]) => html`<li class="item">${widgetIcon(icon)}<span>${text}</span></li>`)}</ul>`
          )}
        </div>
        ${scrollbar(58)}
      </div>
    </aside>`;
  }

  private renderWorkspace() {
    return html`<main class="workspace">
      <section class="mdi">
        <header class="mdi-title">
          <svg class="glyph mdi-logo" width="20" height="25" viewBox="0 0 20 16" aria-hidden="true"><path d="M3 0h17v12l-3 4H0V3z" fill="#41cd52"/><text x="3" y="12" font-family="Noto Sans, sans-serif" font-size="12" font-weight="600" fill="#fff">Qt</text></svg>
          <span class="mdi-name">MainWindow - untitled*</span>
          <button class="mdi-button" aria-label="Minimize form"><svg class="glyph" width="17" height="7" viewBox="0 0 17 7"><rect x=".5" y=".5" width="16" height="6" rx="1" fill="#f6f6f6" stroke="#535666"/></svg></button>
          <button class="mdi-button close" aria-label="Close form"><svg class="glyph" width="18" height="16" viewBox="0 0 18 16"><path d="M1 3l3-2.500h2L9 4l3-3.500h2L17 3l-4.500 5 4.500 5-3 2.500h-2L9 12l-3 3.500H4L1 13l4.500-5z" fill="#f4f4f4" stroke="#535666"/></svg></button>
        </header>
        <div class="mdi-menu"><button class="type-here">在这里输入</button></div>
        <div class="canvas">
          <div class="form-row">
            <label class="mono" for="line-edit">TextLabel</label>
            <input class="field" id="line-edit" />
            <button class="push mono">PushButton</button>
          </div>
          <div class="text-frame"><textarea class="text-edit" aria-label="Text edit"></textarea></div>
          <div class="form-row last"><button class="push mono">PushButton</button></div>
        </div>
        <div class="mdi-status"><svg class="glyph" width="11" height="11" viewBox="0 0 11 11" aria-hidden="true"><path d="M8 0h3v3H8zM4 4h3v3H4zM8 4h3v3H8zM0 8h3v3H0zM4 8h3v3H4zM8 8h3v3H8z" fill="#bdbdbd"/></svg></div>
      </section>
    </main>`;
  }

  private renderObjects() {
    return html`
      ${dockTitle("对象查看器")}
      <div class="inspector-filter"><input class="field" placeholder="Filter" aria-label="Filter objects" /></div>
      <div class="panel inspector-tree">
        <div class="tree-area">
          <table>
            <thead><tr class="tree-head"><th class="col-object">对象</th><th>类</th></tr></thead>
            <tbody>
              ${OBJECTS.map(
                (o) => html`<tr class=${classMap({ "object-row": true, selected: !!o.selected, hover: !!o.hover, "with-icon": !!o.icon })}>
                  <td><div class="tree-cell"><span class="pad" style="width:${o.level * 25}px"></span><span class="twist">${o.open ? chevron("down") : nothing}</span>
                    ${o.icon ? layoutIcon(o.icon, false, 20) : nothing}<span class="object-name">${o.name}</span></div></td>
                  <td class="object-class">${o.cls}</td>
                </tr>`
              )}
            </tbody>
          </table>
        </div>
        ${scrollbar(58)}
      </div>
    `;
  }

  private renderProperties() {
    return html`
      <div class="property-title">${dockTitle("属性编辑器")}</div>
      <div class="property-tools">
        <input class="field" placeholder="Filter" aria-label="Filter properties" />
        <button aria-label="Configure"><svg class="glyph" width="18" height="26" viewBox="0 0 18 26"><path d="M0 16l6-8c-1-4 2-7 6-6l-3 3 2 2 3-2c1 4-2 6-5 5l-7 8z" fill="#b5b5b5" stroke="#888"/><path d="M6 21h8l-4 4z" fill="#000"/></svg></button>
      </div>
      <div class="object-label">MainWindow</div>
      <div class="panel property-tree">
        <div class="tree-area">
          <table>
            <thead><tr class="tree-head"><th class="col-property">属性</th><th></th></tr></thead>
            <tbody>
              ${PROPERTIES.map((p) => {
                const group = p.kind === "group";
                return html`<tr class=${classMap({ "prop-row": true, group, orange: p.kind === "orange" })}>
                  <td><div class="tree-cell"><span class="twist">${group ? chevron("down") : p.expandable ? chevron("right", "#a0a080") : nothing}</span>
                    <span class=${classMap({ "prop-name": true, deep: !!p.deep, bold: !!p.bold })}>${p.name}</span></div></td>
                  <td class="prop-value">${p.value ?? ""}</td>
                </tr>`;
              })}
            </tbody>
          </table>
        </div>
        ${scrollbar(33)}
      </div>
    `;
  }

  private renderResources() {
    return html`
      <div class="resource-title">${dockTitle("")}</div>
      <input class="field resource-filter" placeholder="Filter" aria-label="Filter resources" />
      <div class="resource-panes">
        <div class="panel"><div class="resource-root">&lt;resource root&gt;</div></div>
        <div class="panel"></div>
      </div>
      <div class="tabs"><button class="tab">信号/槽编辑器</button><button class="tab">动作编辑器</button><button class="tab on">资源浏览器</button></div>
    `;
  }

  private renderMenu(kind: string, entries: (MenuEntry | null)[]) {
    return html`<div class="popup ${kind}" role="menu">
      ${entries.map((e) =>
        e
          ? html`<button class=${classMap({ entry: true, tall: !!e.tall, active: !!e.active })} role="menuitem" ?disabled=${!!e.off}>
              <span class="entry-icon">${e.icon ?? nothing}</span><span class="entry-text">${caption(e.text)}</span>
              ${e.key ? html`<span class="entry-key">${e.key}</span>` : nothing}
              ${e.sub ? html`<svg class="glyph" width="5" height="8" viewBox="0 0 5 8" aria-hidden="true"><path d="M0 0l4 4-4 4z" fill="#000"/></svg>` : nothing}
            </button>`
          : html`<hr class="rule" />`
      )}
    </div>`;
  }

  private renderOverlays() {
    return html`
      <button class="upload">
        <span class="upload-logo"><svg class="glyph" width="25" height="20" viewBox="0 0 25 20" aria-hidden="true"><g fill="none" stroke="#fff" stroke-width="3"><circle cx="12.500" cy="6" r="4.500"/><circle cx="6" cy="13.500" r="4.500"/><circle cx="19" cy="13.500" r="4.500"/></g><path d="M9 10.500l7 6" stroke="#fff" stroke-width="3"/></svg></span>
        <span class="upload-text">拖拽上传</span>
      </button>
      <div class="speed">
        <div class="speed-line up"><svg class="glyph" width="12" height="12" viewBox="0 0 12 12" aria-hidden="true"><path d="M6 12V1M1.500 5.500L6 1l4.500 4.500" fill="none" stroke="currentColor" stroke-width="1.500"/></svg><span>0.6 KB/s</span></div>
        <div class="speed-line down"><svg class="glyph" width="12" height="12" viewBox="0 0 12 12" aria-hidden="true"><path d="M6 0v11M1.500 6.500L6 11l4.500-4.500" fill="none" stroke="currentColor" stroke-width="1.500"/></svg><span>2.7 KB/s</span></div>
      </div>
      <div class="ime">
        <svg class="glyph" width="16" height="16" viewBox="0 0 16 16" aria-hidden="true"><rect x="1" y="1" width="14" height="14" fill="#fbe9e6" stroke="#d66a5c" stroke-width="1.600"/><path d="M4 4.500h8M4 8h6.500M3.500 12.500h9M7.500 4.500l-1 8M10.500 8v4.500" stroke="#333" stroke-width="1.500" fill="none"/></svg>
        <span class="ime-mode">中</span>
        <svg class="glyph" width="12" height="12" viewBox="0 0 12 12" aria-hidden="true"><path d="M8 0c5 3 5 11-2 12-3 0-5-1-6-3 5 1 9-3 8-9z" fill="#555"/></svg>
        <svg class="glyph" width="11" height="10" viewBox="0 0 11 10" aria-hidden="true"><circle cx="2" cy="5" r="1.500" fill="none" stroke="#666"/><path d="M8 4h3v3l-2 3H8l1-3H8z" fill="#555"/></svg>
        <svg class="glyph" width="15" height="10" viewBox="0 0 15 10" aria-hidden="true"><rect x=".5" y=".5" width="14" height="9" rx="1" fill="#eee" stroke="#555"/><path d="M2 3h11M2 5h11M4 7.500h7" stroke="#555" stroke-dasharray="1.500 .8"/></svg>
        <svg class="glyph" width="12" height="13" viewBox="0 0 12 13" aria-hidden="true"><circle cx="6" cy="3" r="3" fill="#555"/><path d="M4 5h4l3 3v5H7l-1-3-1 3H1V8z" fill="#555"/></svg>
        <svg class="glyph" width="13" height="13" viewBox="0 0 13 13" aria-hidden="true"><path d="M0 11l6-6c-1-3 2-6 5-5L8.500 2.500l2 2L13 2c1 3-2 6-5 5l-6 6z" fill="#555"/></svg>
      </div>
    `;
  }

  private renderTaskbar() {
    return html`<footer class="taskbar">
      <button class="task" aria-label="Start"><svg class="glyph" width="20" height="20" viewBox="0 0 20 20"><path d="M0 3l8-1.200V9.500H0zM9 1.600L20 0v9.500H9zM0 10.500h8v7.700L0 17zM9 10.500h11V20L9 18.400z" fill="#fff"/></svg></button>
      <button class="task" aria-label="Search"><svg class="glyph" width="20" height="20" viewBox="0 0 20 20"><circle cx="10" cy="10" r="8.500" fill="none" stroke="#fff" stroke-width="2.400"/></svg></button>
      <button class="task" aria-label="Task view"><svg class="glyph" width="20" height="20" viewBox="0 0 20 20"><path d="M.5 0v3.500h12V0M.5 20v-3.500h12V20M.5 6h12v8.500H.500zM18.500 0v5M18.500 11v9" fill="none" stroke="#fff"/><path d="M17 6h3v3h-3z" fill="#fff"/></svg></button>
      <div class="launches">
        ${TASKS.map(
          (t) => html`<button class=${classMap({ launch: true, active: !!t.active })} aria-label=${t.name}>
            <svg class="glyph" width="30" height="30" viewBox="0 0 30 30">${t.art}</svg><span class=${classMap({ bar: true, stacked: !!t.stacked })}></span>
          </button>`
        )}
      </div>
      <div class="tray">
        <button class="tray-item" aria-label="Hidden icons"><svg class="glyph" width="16" height="9" viewBox="0 0 16 9"><path d="M.5 8.500L8 1l7.500 7.500" fill="none" stroke="#fff" stroke-width="1.300"/></svg></button>
        <button class="tray-item" aria-label="Battery"><svg class="glyph" width="20" height="14" viewBox="0 0 20 14"><path d="M1 0v3M4 0v3M0 3h5v3H0zM2.500 6v5h3" fill="none" stroke="#fff"/><path d="M7 2.500h11.500v10H5.500V8" fill="none" stroke="#fff"/><path d="M7 4h10v7H7z" fill="#fff"/><path d="M19 5h1v4h-1z" fill="#fff"/></svg></button>
        <button class="tray-item" aria-label="Network"><svg class="glyph" width="16" height="16" viewBox="0 0 16 16"><path d="M.7 15C1 7 7 1 15 1M4 15C4 9 9 4.500 15 4.500M7.500 15c0-4 3.500-7 7.500-7" fill="none" stroke="#fff" stroke-width="1.200"/><path d="M10.500 15c0-2 2-4 4.500-4" stroke="#fff" fill="none"/><circle cx="14" cy="14" r="1.800" fill="#fff"/></svg></button>
        <button class="tray-item" aria-label="Volume"><svg class="glyph" width="22" height="18" viewBox="0 0 22 18"><path d="M.5 6.500H4L8.500 2v14L4 11.500H.500z" fill="none" stroke="#fff"/><path d="M11 6.500q2 2.500 0 5M14 4q4 5 0 10M17 1.500q6 7.500 0 15" fill="none" stroke="#fff" stroke-width="1.200"/></svg></button>
        <span class="tray-item">中</span>
        <span class="tray-badge">五</span>
        <div class="clock">17:53<br />2021/6/3</div>
        <button class="notice" aria-label="Notifications"><svg class="glyph" width="30" height="30" viewBox="0 0 30 30"><path d="M0 0h20v16h-8l-3 4v-4H0z" fill="#fff"/><path d="M4 4.500h12M4 8.500h12M4 12.500h7" stroke="#203432"/><circle cx="19.500" cy="20" r="9.500" fill="#2b3433" stroke="#98a09f"/><text x="16" y="25" font-family="Noto Sans, sans-serif" font-size="14" font-weight="bold" fill="#fff">1</text></svg></button>
        <span class="show-desktop"></span>
      </div>
    </footer>`;
  }

  render() {
    return html`
      ${this.renderDefs()} ${this.renderTitle()} ${this.renderToolbar()}
      <div class="main">
        ${this.renderWidgetBox()} ${this.renderWorkspace()}
        <aside class="dock">${this.renderObjects()} ${this.renderProperties()} ${this.renderResources()}</aside>
      </div>
      <div class="status-line"></div>
      ${this.renderTaskbar()} ${this.renderMenu("context", CONTEXT_MENU)} ${this.renderMenu("layouts", LAYOUT_MENU)} ${this.renderOverlays()}
    `;
  }
}
